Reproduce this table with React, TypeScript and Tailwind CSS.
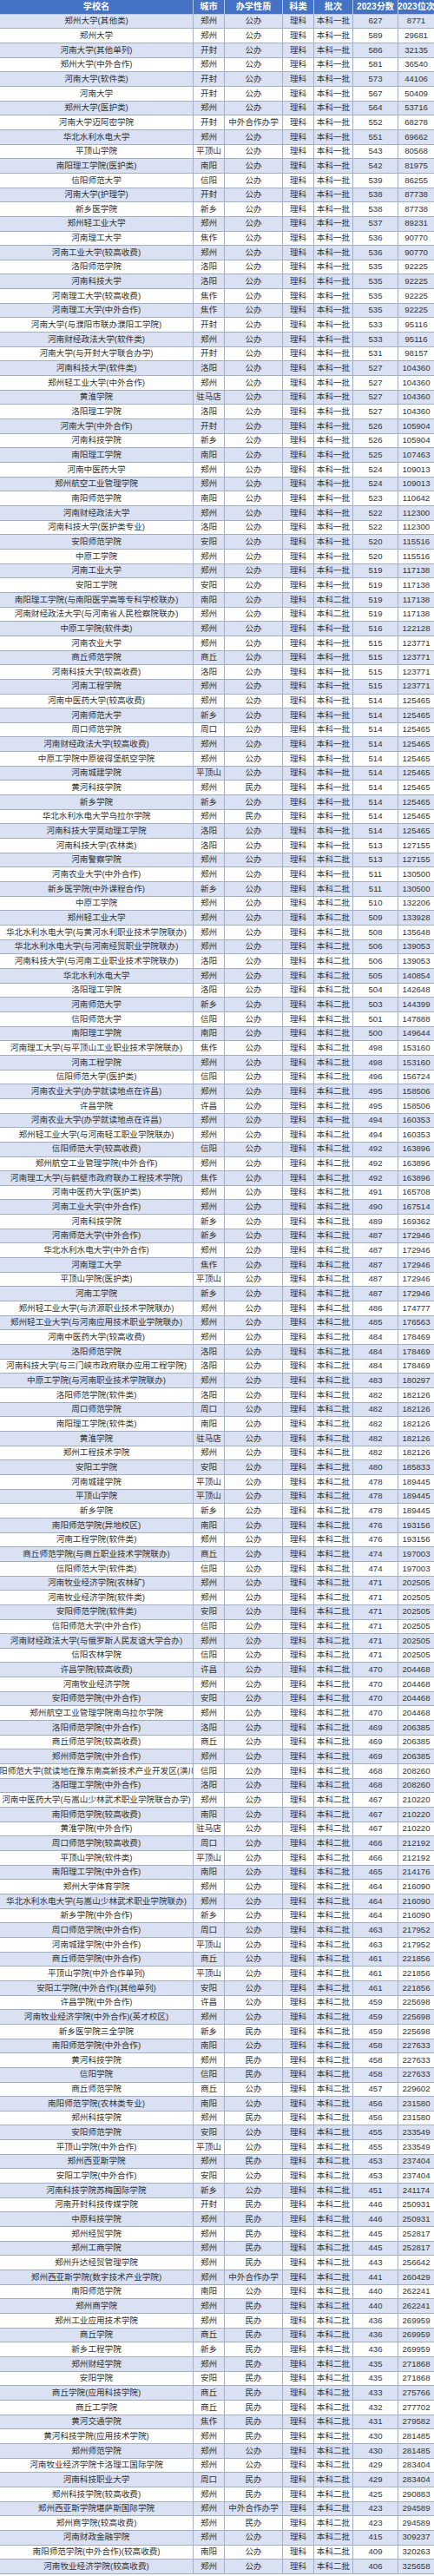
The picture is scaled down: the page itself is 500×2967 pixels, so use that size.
import React from "react";

const raw = `郑州大学(其他类) 郑州 公 一 627 8771
郑州大学 郑州 公 一 589 29681
河南大学(其他单列) 开封 公 一 586 32135
郑州大学(中外合作) 郑州 公 一 581 36540
河南大学(软件类) 开封 公 一 573 44106
河南大学 开封 公 一 567 50409
郑州大学(医护类) 郑州 公 一 564 53716
河南大学迈阿密学院 开封 中 一 552 68278
华北水利水电大学 郑州 公 一 551 69662
平顶山学院 平顶山 公 一 543 80568
南阳理工学院(医护类) 南阳 公 一 542 81975
信阳师范大学 信阳 公 一 539 86255
河南大学(护理学) 开封 公 一 538 87738
新乡医学院 新乡 公 一 538 87738
郑州轻工业大学 郑州 公 一 537 89231
河南理工大学 焦作 公 一 536 90770
河南工业大学(较高收费) 郑州 公 一 536 90770
洛阳师范学院 洛阳 公 一 535 92225
河南科技大学 洛阳 公 一 535 92225
河南理工大学(较高收费) 焦作 公 一 535 92225
河南理工大学(中外合作) 焦作 公 一 535 92225
河南大学(与濮阳市联办濮阳工学院) 开封 公 一 533 95116
河南财经政法大学(软件类) 郑州 公 一 533 95116
河南大学(与开封大学联合办学) 开封 公 一 531 98157
河南科技大学(软件类) 洛阳 公 一 527 104360
郑州轻工业大学(中外合作) 郑州 公 一 527 104360
黄淮学院 驻马店 公 一 527 104360
洛阳理工学院 洛阳 公 一 527 104360
河南大学(中外合作) 开封 公 一 526 105904
河南科技学院 新乡 公 一 526 105904
南阳理工学院 南阳 公 一 525 107463
河南中医药大学 郑州 公 一 524 109013
郑州航空工业管理学院 郑州 公 一 524 109013
南阳师范学院 南阳 公 一 523 110642
河南财经政法大学 郑州 公 一 522 112300
河南科技大学(医护类专业) 洛阳 公 一 522 112300
安阳师范学院 安阳 公 一 520 115516
中原工学院 郑州 公 一 520 115516
河南工业大学 郑州 公 一 519 117138
安阳工学院 安阳 公 一 519 117138
南阳理工学院(与南阳医学高等专科学校联办) 南阳 公 二 519 117138
河南财经政法大学(与河南省人民检察院联办) 郑州 公 二 519 117138
中原工学院(软件类) 郑州 公 一 516 122128
河南农业大学 郑州 公 一 515 123771
商丘师范学院 商丘 公 一 515 123771
河南科技大学(较高收费) 洛阳 公 一 515 123771
河南工程学院 郑州 公 一 515 123771
河南中医药大学(较高收费) 郑州 公 一 514 125465
河南师范大学 新乡 公 一 514 125465
周口师范学院 周口 公 一 514 125465
河南财经政法大学(较高收费) 郑州 公 一 514 125465
中原工学院中原彼得堡航空学院 郑州 公 一 514 125465
河南城建学院 平顶山 公 一 514 125465
黄河科技学院 郑州 民 一 514 125465
新乡学院 新乡 公 一 514 125465
华北水利水电大学乌拉尔学院 郑州 民 一 514 125465
河南科技大学莫动理工学院 洛阳 公 一 514 125465
河南科技大学(农林类) 洛阳 公 一 513 127155
河南警察学院 郑州 公 二 513 127155
河南农业大学(中外合作) 郑州 公 一 511 130500
新乡医学院(中外课程合作) 新乡 公 二 511 130500
中原工学院 郑州 公 二 510 132206
郑州轻工业大学 郑州 公 二 509 133928
华北水利水电大学(与黄河水利职业技术学院联办) 郑州 公 二 508 135648
华北水利水电大学(与河南经贸职业学院联办) 郑州 公 二 506 139053
河南科技大学(与河南工业职业技术学院联办) 洛阳 公 二 506 139053
华北水利水电大学 郑州 公 二 505 140854
洛阳理工学院 洛阳 公 二 504 142648
河南师范大学 新乡 公 二 503 144399
信阳师范大学 信阳 公 二 501 147888
南阳理工学院 南阳 公 二 500 149644
河南理工大学(与平顶山工业职业技术学院联办) 焦作 公 二 498 153160
河南工程学院 郑州 公 二 498 153160
信阳师范大学(医护类) 信阳 公 二 496 156724
河南农业大学(办学就读地点在许昌) 郑州 公 二 495 158506
许昌学院 许昌 公 二 495 158506
河南农业大学(办学就读地点在许昌) 郑州 公 一 494 160353
郑州轻工业大学(与河南轻工职业学院联办) 郑州 公 二 494 160353
信阳师范大学(较高收费) 信阳 公 二 492 163896
郑州航空工业管理学院(中外合作) 郑州 公 二 492 163896
河南理工大学(与鹤壁市政府联办工程技术学院) 焦作 公 二 492 163896
河南中医药大学(医护类) 郑州 公 二 491 165708
河南工业大学(中外合作) 郑州 公 二 490 167514
河南科技学院 新乡 公 二 489 169362
河南师范大学(中外合作) 新乡 公 二 487 172946
华北水利水电大学(中外合作) 郑州 公 二 487 172946
河南理工大学 焦作 公 二 487 172946
平顶山学院(医护类) 平顶山 公 二 487 172946
河南工学院 新乡 公 二 487 172946
郑州轻工业大学(与济源职业技术学院联办) 郑州 公 二 486 174777
郑州轻工业大学(与河南应用技术职业学院联办) 郑州 公 二 485 176563
河南中医药大学(较高收费) 郑州 公 二 484 178469
洛阳师范学院 洛阳 公 二 484 178469
河南科技大学(与三门峡市政府联办应用工程学院) 洛阳 公 二 484 178469
中原工学院(与河南职业技术学院联办) 郑州 公 二 483 180297
洛阳师范学院(软件类) 洛阳 公 二 482 182126
周口师范学院 周口 公 二 482 182126
南阳理工学院(软件类) 南阳 公 二 482 182126
黄淮学院 驻马店 公 二 482 182126
郑州工程技术学院 郑州 公 二 482 182126
安阳工学院 安阳 公 二 480 185833
河南城建学院 平顶山 公 二 478 189445
平顶山学院 平顶山 公 二 478 189445
新乡学院 新乡 公 二 478 189445
南阳师范学院(异地校区) 南阳 公 二 476 193156
河南工程学院(软件类) 郑州 公 二 476 193156
商丘师范学院(与商丘职业技术学院联办) 商丘 公 二 474 197003
信阳师范大学(软件类) 信阳 公 二 474 197003
河南牧业经济学院(农林矿) 郑州 公 二 471 202505
河南牧业经济学院(软件类) 郑州 公 二 471 202505
安阳师范学院(软件类) 安阳 公 二 471 202505
信阳师范大学(中外合作) 信阳 公 二 471 202505
河南财经政法大学(与俄罗斯人民友谊大学合办) 郑州 公 二 471 202505
信阳农林学院 信阳 公 二 471 202505
许昌学院(较高收费) 许昌 公 二 470 204468
河南牧业经济学院 郑州 公 二 470 204468
安阳师范学院(中外合作) 安阳 公 二 470 204468
郑州航空工业管理学院南乌拉尔学院 郑州 公 二 470 204468
洛阳师范学院(中外合作) 洛阳 公 二 469 206385
商丘师范学院(较高收费) 商丘 公 二 469 206385
郑州师范学院(中外合作) 郑州 公 二 469 206385
信阳师范大学(就读地在豫东南高新技术产业开发区(潢川)) 信阳 公 二 468 208260
洛阳理工学院(中外合作) 洛阳 公 二 468 208260
河南中医药大学(与嵩山少林武术职业学院联合办学) 郑州 公 二 467 210220
南阳师范学院(较高收费) 南阳 公 二 467 210220
黄淮学院(中外合作) 驻马店 公 二 467 210220
周口师范学院(较高收费) 周口 公 二 466 212192
平顶山学院(软件类) 平顶山 公 二 466 212192
南阳理工学院(中外合作) 南阳 公 二 465 214176
郑州大学体育学院 郑州 公 二 464 216090
华北水利水电大学(与嵩山少林武术职业学院联办) 郑州 公 二 464 216090
新乡学院(中外合作) 新乡 公 二 464 216090
周口师范学院(中外合作) 周口 公 二 463 217952
河南城建学院(中外合作) 平顶山 公 二 463 217952
商丘师范学院(中外合作) 商丘 公 二 461 221856
平顶山学院(中外合作单列) 平顶山 公 二 461 221856
安阳工学院(中外合作)(其他单列) 安阳 公 二 461 221856
许昌学院(中外合作) 许昌 公 二 459 225698
河南牧业经济学院(中外合作)(英才校区) 郑州 公 二 459 225698
新乡医学院三全学院 新乡 民 二 459 225698
南阳师范学院(中外合作) 南阳 公 二 458 227633
黄河科技学院 郑州 民 二 458 227633
信阳学院 信阳 民 二 458 227633
商丘师范学院 商丘 公 二 457 229602
南阳师范学院(农林类专业) 南阳 公 二 456 231580
郑州科技学院 郑州 民 二 456 231580
安阳师范学院 安阳 公 二 455 233549
平顶山学院(中外合作) 平顶山 公 二 455 233549
郑州西亚斯学院 郑州 民 二 453 237404
安阳工学院(中外合作) 安阳 公 二 453 237404
河南科技学院苏梅国际学院 新乡 公 二 451 241174
河南开封科技传媒学院 开封 民 二 446 250931
中原科技学院 郑州 民 二 446 250931
郑州经贸学院 郑州 民 二 445 252817
郑州工商学院 郑州 民 二 445 252817
郑州升达经贸管理学院 郑州 民 二 443 256642
郑州西亚斯学院(数字技术产业学院) 郑州 中 二 441 260429
南阳师范学院 南阳 公 二 440 262241
郑州商学院 郑州 民 二 440 262241
郑州工业应用技术学院 郑州 民 二 436 269959
商丘学院 商丘 民 二 436 269959
新乡工程学院 新乡 民 二 436 269959
郑州财经学院 郑州 民 二 435 271868
安阳学院 安阳 民 二 435 271868
商丘学院(应用科技学院) 商丘 民 二 433 275766
商丘工学院 商丘 民 二 432 277702
黄河交通学院 焦作 民 二 431 279582
黄河科技学院(应用技术学院) 郑州 民 二 430 281485
郑州师范学院 郑州 公 二 430 281485
河南牧业经济学院卡洛理工国际学院 郑州 公 二 429 283404
河南科技职业大学 周口 民 二 429 283404
郑州科技学院(较高收费) 郑州 民 二 425 290883
郑州西亚斯学院堪萨斯国际学院 郑州 中 二 423 294589
郑州商学院(较高收费) 郑州 民 二 423 294589
河南财政金融学院 郑州 公 二 415 309237
南阳师范学院(中外合作)(较高收费) 南阳 公 二 409 320263
河南牧业经济学院(较高收费) 郑州 公 二 406 325658`;

const natureMap: Record<string, string> = {
  公: "公办",
  民: "民办",
  中: "中外合作办学",
};

const rows = raw.split("\n").map((line) => {
  const [name, city, nature, batch, score, rank] = line.trim().split(" ");
  return {
    name,
    city,
    nature: natureMap[nature],
    batch: batch === "一" ? "本科一批" : "本科二批",
    score,
    rank,
  };
});

const widths = ["w-[223px]", "w-[36px]", "w-[67px]", "w-[36px]", "w-[45px]", "w-[52px]", "w-[41px]"];
const headers = ["学校名", "城市", "办学性质", "科类", "批次", "2023分数", "2023位次"];

export default function App() {
  return (
    <div className="w-[500px] bg-white font-['Liberation_Sans','Noto_Sans_CJK_SC',sans-serif]">
      {/* header */}
      <div className="flex h-[16.67px] bg-[#4472c4] text-white font-bold text-[10.2px]">
        {headers.map((h, i) => (
          <div
            key={h}
            className={`${widths[i]} shrink-0 flex items-center justify-center overflow-hidden whitespace-nowrap border-r border-b border-[#b4c6e7] last:border-r-0`}
          >
            {h}
          </div>
        ))}
      </div>

      {rows.map((r, idx) => {
        const cells = [r.name, r.city, r.nature, "理科", r.batch, r.score, r.rank];
        return (
          <div
            key={idx}
            className={`flex h-[16.67px] text-[9.6px] text-[#333333] ${
              idx % 2 === 0 ? "bg-[#d9e1f2]" : "bg-white"
            }`}
          >
            {cells.map((c, i) => (
              <div
                key={i}
                className={`${widths[i]} shrink-0 flex items-center justify-center overflow-hidden whitespace-nowrap border-r border-b border-[#a3afc2] last:border-r-0`}
              >
                {c}
              </div>
            ))}
          </div>
        );
      })}
    </div>
  );
}
